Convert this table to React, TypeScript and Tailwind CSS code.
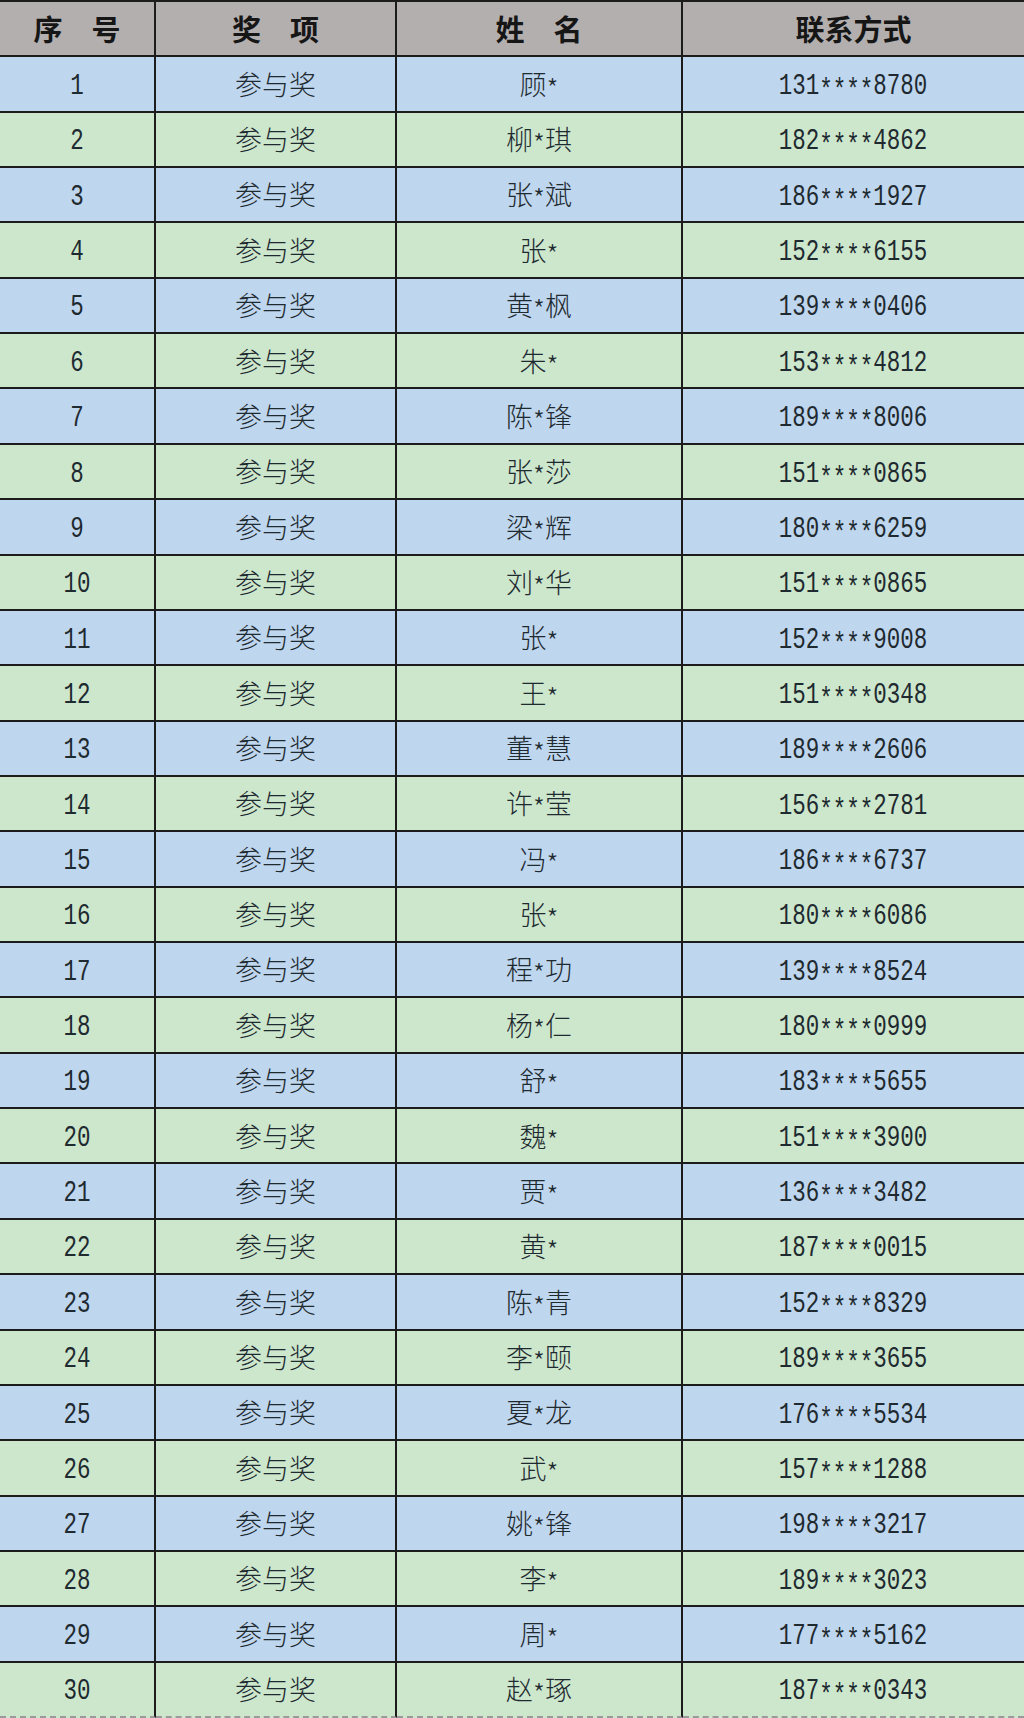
const rows: [string, string][] = [
  ["顾*", "131****8780"],
  ["柳*琪", "182****4862"],
  ["张*斌", "186****1927"],
  ["张*", "152****6155"],
  ["黄*枫", "139****0406"],
  ["朱*", "153****4812"],
  ["陈*锋", "189****8006"],
  ["张*莎", "151****0865"],
  ["梁*辉", "180****6259"],
  ["刘*华", "151****0865"],
  ["张*", "152****9008"],
  ["王*", "151****0348"],
  ["董*慧", "189****2606"],
  ["许*莹", "156****2781"],
  ["冯*", "186****6737"],
  ["张*", "180****6086"],
  ["程*功", "139****8524"],
  ["杨*仁", "180****0999"],
  ["舒*", "183****5655"],
  ["魏*", "151****3900"],
  ["贾*", "136****3482"],
  ["黄*", "187****0015"],
  ["陈*青", "152****8329"],
  ["李*颐", "189****3655"],
  ["夏*龙", "176****5534"],
  ["武*", "157****1288"],
  ["姚*锋", "198****3217"],
  ["李*", "189****3023"],
  ["周*", "177****5162"],
  ["赵*琢", "187****0343"],
];

const cjk = "font-['Noto_Sans_CJK_SC',sans-serif]";
const mono = "font-['Liberation_Mono',monospace]";

// asterisks sit lower in the source font, nudge them down
function Stars({ text }: { text: string }) {
  return <span className="inline-block translate-y-[5px]">{text}</span>;
}

function Num({ children }: { children: string }) {
  const parts = children.split(/(\*+)/);
  return (
    <span className={`inline-block translate-y-[2px] scale-x-[0.75] ${mono} text-[30px] leading-none`}>
      {parts.map((p, i) => (p.startsWith("*") ? <Stars key={i} text={p} /> : p))}
    </span>
  );
}

function Name({ text }: { text: string }) {
  const parts = text.split(/(\*)/);
  return (
    <span>
      {parts.map((p, i) =>
        p === "*" ? (
          <span key={i} className="inline-block translate-y-[4px]">*</span>
        ) : (
          p
        )
      )}
    </span>
  );
}

export default function App() {
  return (
    <div className="w-[1024px] h-[1718px] bg-white">
      <div className="grid h-full grid-cols-[156px_241px_286px_341px] grid-rows-[repeat(31,minmax(0,1fr))] border-t-2 border-r-2 border-[#1c1c1c]">
        {/* header */}
        {["序　号", "奖　项", "姓　名", "联系方式"].map((h, i) => (
          <div
            key={h}
            className={`flex items-center justify-center bg-[#b3afaf] border-b-2 border-[#1c1c1c] ${i < 3 ? "border-r-2" : ""} ${cjk} font-bold text-[29px] text-[#161616]`}
          >
            {h}
          </div>
        ))}

        {rows.map(([name, phone], idx) => {
          const bg = idx % 2 === 0 ? "bg-[#bed6ee]" : "bg-[#cde7cd]";
          const last = idx === rows.length - 1;
          // bottom edge of the sheet is a dashed grey line
          const bottom = last ? "border-b-2 [border-bottom-style:dashed] border-b-[#9a9a9a]" : "border-b-2";
          const cell = `flex items-center justify-center ${bg} border-[#1c1c1c] ${bottom} text-[#1e2a30]`;
          return [
            <div key={`a${idx}`} className={`${cell} border-r-2`}>
              <Num>{String(idx + 1)}</Num>
            </div>,
            <div key={`b${idx}`} className={`${cell} border-r-2 ${cjk} font-light text-[27px]`}>
              参与奖
            </div>,
            <div key={`c${idx}`} className={`${cell} border-r-2 ${cjk} font-light text-[27px]`}>
              <Name text={name} />
            </div>,
            <div key={`d${idx}`} className={cell}>
              <Num>{phone}</Num>
            </div>,
          ];
        })}
      </div>
    </div>
  );
}
